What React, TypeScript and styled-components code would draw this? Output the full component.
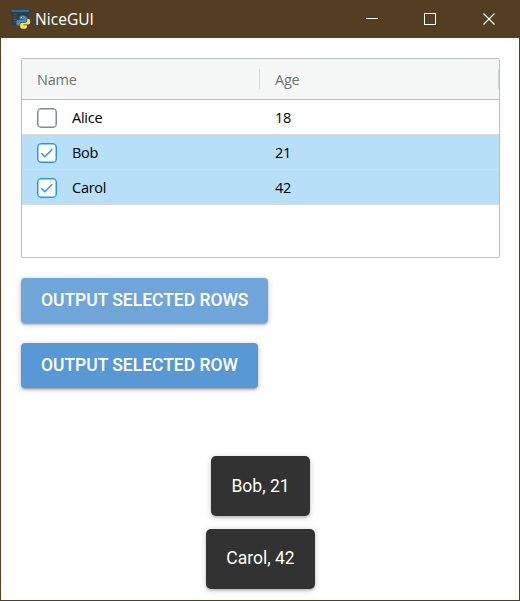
import React from "react";
import styled, { createGlobalStyle } from "styled-components";

const GlobalStyle = createGlobalStyle`
  * { box-sizing: border-box; }
  body { margin: 0; background: #fff; }
`;

const Window = styled.div`
  width: 520px;
  height: 601px;
  border: 1px solid #543e22;
  border-top: 0;
  background: #fff;
  display: flex;
  flex-direction: column;
  overflow: hidden;
  font-family: Roboto, sans-serif;
`;

const TitleBar = styled.header`
  flex: none;
  height: 38px;
  margin: 0 -1px;
  padding: 0 2px 0 11px;
  background: #543e22;
  display: flex;
  align-items: center;
`;

const Title = styled.span`
  flex: 1;
  margin: 0 0 0 4px;
  color: #fff;
  font: 15.6px/20px "Open Sans", sans-serif;
`;

const WindowButton = styled.span`
  width: 58.5px;
  height: 38px;
  display: flex;
  align-items: center;
  justify-content: center;
`;

const Content = styled.main`
  flex: 1;
  padding: 20px 19px 0 20px;
  display: flex;
  flex-direction: column;
  align-items: flex-start;
  gap: 20px;
`;

const Grid = styled.div`
  width: 479px;
  height: 200px;
  border: 1px solid #babfc7;
  border-radius: 2px;
  overflow: hidden;
  font-family: "Open Sans", "Noto Sans", sans-serif;
  font-size: 14.5px;
  letter-spacing: -0.25px;
`;

const GridHeader = styled.div`
  display: flex;
  height: 41px;
  background: #f5f7f7;
  border-bottom: 1px solid #babfc7;
  color: #6f7272;
  font-weight: 500;
`;

const HeaderCell = styled.div`
  width: 238px;
  padding-left: 15px;
  display: flex;
  align-items: center;
  justify-content: space-between;
  &::after {
    content: "";
    width: 1px;
    height: 20px;
    background: #d7dadb;
  }
  &:last-child {
    width: 239px;
  }
`;

const Row = styled.div<{ $selected: boolean }>`
  display: flex;
  height: 35px;
  border-bottom: 1px solid #d8dcde;
  background: ${(p) => (p.$selected ? "#b7e0f8" : "#fff")};
  color: #000;
`;

const Cell = styled.div`
  width: 238px;
  padding-left: 15px;
  display: flex;
  align-items: center;
`;

const CheckBox = styled.span<{ $checked: boolean }>`
  width: 20px;
  height: 20px;
  margin: 2px 15px 0 0;
  border: 1px solid ${(p) => (p.$checked ? "#2196f3" : "#7f8c8d")};
  box-shadow: inset 0 0 0 0.5px ${(p) => (p.$checked ? "#2196f3" : "#7f8c8d")};
  border-radius: 4px;
  background: #fff;
  display: flex;
  align-items: center;
  justify-content: center;
`;

const ActionButton = styled.button<{ $hovered?: boolean }>`
  height: 45px;
  padding: 0 20px 1px;
  border: 0;
  border-radius: 4px;
  background: ${(p) => (p.$hovered ? "#70a5da" : "#5898d4")};
  color: #fff;
  font: 500 17.5px/30px Roboto, sans-serif;
  letter-spacing: -0.02px;
  white-space: nowrap;
  box-shadow: 0 1px 6px rgba(0, 0, 0, 0.2), 0 2px 2px rgba(0, 0, 0, 0.18),
    0 3px 1px -2px rgba(0, 0, 0, 0.12);
`;

const Notifications = styled.div`
  align-self: center;
  margin-top: 48px;
  display: flex;
  flex-direction: column;
  align-items: center;
  gap: 13px;
`;

const Toast = styled.div`
  height: 60px;
  padding: 0 20px;
  border-radius: 5px;
  background: #323232;
  color: #fff;
  font-size: 17.5px;
  line-height: 60px;
  box-shadow: 0 1px 6px rgba(0, 0, 0, 0.2), 0 2px 2px rgba(0, 0, 0, 0.14);
  &:last-child {
    line-height: 59px;
  }
`;

const AppIcon = () => (
  <svg width="20" height="20" viewBox="0 -1 20 20">
    <rect x="0.5" y="0" width="17.5" height="15" fill="#343d42" />
    <rect x="0.5" y="0" width="17.5" height="2" fill="#0875c5" />
    <path d="M2.5 4.5h3M2.5 7h2M2.5 9.5h3M2.5 12h2" stroke="#416252" />
    <path
      d="M12 5.5c-3 0-3.3 1-3.3 2.4v1.2h3.6v.7H7.5C6 9.8 5.3 11 5.3 12.8s.8 2.9 2 2.9h1.4v-1.6c0-1.2 1-2 2.1-2h3.1c1 0 1.8-.8 1.8-1.8V7.9c0-1.5-1.2-2.4-3.7-2.4z"
      fill="#4b8bc0"
    />
    <path
      d="M12.4 18.8c3 0 3.5-1 3.5-2.4v-1.2h-3.6v-.7h4.8c1.5 0 2.1-1.1 2.1-2.8s-.7-2.9-1.9-2.9h-1.1v1.9c0 1.2-1 2-2.1 2H11c-1 0-1.8.8-1.8 1.8v1.9c0 1.5 1 2.4 3.2 2.4z"
      fill="#ffdf55"
    />
    <circle cx="10.4" cy="7.4" r=".6" fill="#fff" />
    <circle cx="14.2" cy="16.8" r=".6" fill="#fff" />
  </svg>
);

const people = [
  { name: "Alice", age: 18, selected: false },
  { name: "Bob", age: 21, selected: true },
  { name: "Carol", age: 42, selected: true },
];

export default function App() {
  return (
    <>
      <GlobalStyle />
      <Window>
        <TitleBar>
          <AppIcon />
          <Title>NiceGUI</Title>
          <WindowButton>
            <svg width="12" height="12" shapeRendering="crispEdges">
              <rect y="5" width="12" height="1" fill="#fff" />
            </svg>
          </WindowButton>
          <WindowButton>
            <svg width="12" height="12" shapeRendering="crispEdges">
              <rect x=".5" y=".5" width="11" height="11" fill="none" stroke="#fff" />
            </svg>
          </WindowButton>
          <WindowButton>
            <svg width="12" height="12">
              <path d="M.5 .5l11 11M11.5 .5l-11 11" stroke="#fff" strokeWidth="1.1" />
            </svg>
          </WindowButton>
        </TitleBar>
        <Content>
          <Grid>
            <GridHeader>
              <HeaderCell>Name</HeaderCell>
              <HeaderCell>Age</HeaderCell>
            </GridHeader>
            {people.map((p) => (
              <Row key={p.name} $selected={p.selected}>
                <Cell>
                  <CheckBox $checked={p.selected}>
                    {p.selected && (
                      <svg width="14" height="12" viewBox="0 0 14 12">
                        <path d="M1.3 6.2l3.5 3.6 7.5-7.6" fill="none" stroke="#2196f3" strokeWidth="1.5" />
                      </svg>
                    )}
                  </CheckBox>
                  {p.name}
                </Cell>
                <Cell>{p.age}</Cell>
              </Row>
            ))}
          </Grid>
          <ActionButton $hovered>OUTPUT SELECTED ROWS</ActionButton>
          <ActionButton>OUTPUT SELECTED ROW</ActionButton>
          <Notifications>
            {people
              .filter((p) => p.selected)
              .map((p) => (
                <Toast key={p.name}>
                  {p.name}, {p.age}
                </Toast>
              ))}
          </Notifications>
        </Content>
      </Window>
    </>
  );
}
